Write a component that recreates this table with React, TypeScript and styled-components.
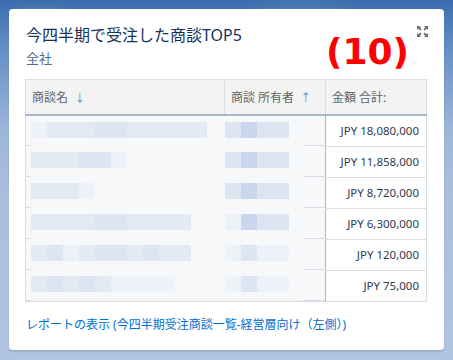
import React from 'react'
import styled, {createGlobalStyle} from 'styled-components'

type Deal = {
  amount: string
  name: string[]
  owner: string[]
}

// owners are masked, so each cell just shows its colour tiles
const L = '#e4eaf4'
const M = '#dde5f2'
const D = '#c9d6ee'
const F = '#eef1f7'

const deals: Deal[] = [
  {amount: 'JPY 18,080,000', name: [F, L, L, L, M, M, L, L, L, L, L], owner: [M, D, M, M]},
  {amount: 'JPY 11,858,000', name: [L, L, L, M, M, F], owner: [M, D, M, M]},
  {amount: 'JPY 8,720,000', name: [L, L, L, F], owner: [M, D, M, M]},
  {amount: 'JPY 6,300,000', name: [L, L, L, L, M, M, L, L, L, L], owner: [F, D, M, M]},
  {amount: 'JPY 120,000', name: [L, M, F, L, M, M, L, M, L, L], owner: [F, M, F, F]},
  {amount: 'JPY 75,000', name: [L, M, L, M, L, F, F, F, F], owner: [F, M, F, F]}
]

const GlobalStyle = createGlobalStyle`
  html, body {
    margin: 0;
    height: 100%;
  }
  body {
    font-family: "Noto Sans", "Noto Sans CJK JP", sans-serif;
    background:
      radial-gradient(ellipse 60px 30px at 40px 20px, rgba(255,255,255,0.08), transparent 70%),
      radial-gradient(ellipse 80px 30px at 300px 10px, rgba(255,255,255,0.07), transparent 70%),
      linear-gradient(to bottom, #3a6cae 0px, #6690c6 50px, #9db6da 130px, #aabfdd 200px, #b0c4e0 100%);
  }
`

export default function App() {
  return (
    <Page>
      <GlobalStyle />
      <Card>
        <Header>
          <Titles>
            <Title>今四半期で受注した商談TOP5</Title>
            <Subtitle>全社</Subtitle>
          </Titles>
          <Badge>(10)</Badge>
          <ExpandButton aria-label="expand">
            <ExpandIcon />
          </ExpandButton>
        </Header>
        <Table>
          <thead>
            <tr>
              <Th $width={199}>
                商談名 <SortArrow>↓</SortArrow>
              </Th>
              <Th $width={101}>
                商談 所有者 <SortArrow>↑</SortArrow>
              </Th>
              <Th>金額 合計:</Th>
            </tr>
          </thead>
          <tbody>
            {deals.map((deal, i) => (
              <tr key={i}>
                <MaskCell $tick="left">
                  <Tiles colors={deal.name} inset={5} />
                </MaskCell>
                <MaskCell $tick="right">
                  <Tiles colors={deal.owner} inset={0} />
                </MaskCell>
                <AmountCell $last={i === deals.length - 1}>{deal.amount}</AmountCell>
              </tr>
            ))}
          </tbody>
        </Table>
        <Footer>
          <ReportLink href="#">レポートの表示 (今四半期受注商談一覧-経営層向け（左側）)</ReportLink>
        </Footer>
      </Card>
    </Page>
  )
}

function Tiles({colors, inset}: {colors: string[]; inset: number}) {
  return (
    <TileRow $inset={inset}>
      {colors.map((c, i) => (
        <Tile key={i} style={{background: c}} />
      ))}
    </TileRow>
  )
}

function ExpandIcon() {
  return (
    <svg width="11" height="11" viewBox="0 0 11 11" fill="#706e6b">
      <path d="M0 0h4L2.7 1.3 4.6 3.2 3.2 4.6 1.3 2.7 0 4z" />
      <path d="M11 0v4L9.7 2.7 7.8 4.6 6.4 3.2 8.3 1.3 7 0z" />
      <path d="M0 11V7l1.3 1.3 1.9-1.9 1.4 1.4-1.9 1.9L4 11z" />
      <path d="M11 11H7l1.3-1.3-1.9-1.9 1.4-1.4 1.9 1.9L11 7z" />
    </svg>
  )
}

const Page = styled.div`
  padding: 9px 9px 10px;
`

const Card = styled.div`
  background: #fff;
  border-radius: 4px;
  box-shadow: 0 2px 2px rgba(0, 0, 0, 0.12);
  padding: 14px 17px 0 16px;
  height: 341px;
  box-sizing: border-box;
  display: flex;
  flex-direction: column;
`

const Header = styled.div`
  position: relative;
  display: flex;
  align-items: flex-start;
  height: 56px;
`

const Titles = styled.div`
  display: flex;
  flex-direction: column;
  flex: 1;
  padding-left: 1px;
`

const Title = styled.div`
  font-size: 16px;
  line-height: 24px;
  color: #16325c;
`

const Subtitle = styled.div`
  font-size: 13px;
  line-height: 20px;
  color: #54698d;
  margin-top: 1px;
`

const Badge = styled.div`
  font-family: "DejaVu Sans", sans-serif;
  font-weight: bold;
  font-size: 36px;
  line-height: 42px;
  color: #ff0000;
  margin: 8px 8px 0 0;
`

const ExpandButton = styled.div`
  display: flex;
  margin-top: 3px;
  margin-right: -1px;
`

const Table = styled.table`
  border-collapse: collapse;
  width: 402px;
  table-layout: fixed;
  border: 1px solid #d8dde6;
  font-size: 12px;
`

const Th = styled.th<{$width?: number}>`
  box-sizing: border-box;
  width: ${(p) => (p.$width ? `${p.$width}px` : 'auto')};
  height: 35px;
  padding: 0 0 0 6px;
  text-align: left;
  font-weight: normal;
  color: #5f6368;
  background: #f3f3f3;
  border-left: 1px solid #d8dde6;
  border-bottom: 2px solid #a8b8cc;
  white-space: nowrap;
`

const SortArrow = styled.span`
  color: #5a8ccb;
  font-size: 11px;
  margin-left: 3px;
`

const MaskCell = styled.td<{$tick: 'left' | 'right'}>`
  position: relative;
  height: 30px;
  padding: 0;
  background: #f7f8fa;
  vertical-align: top;
  overflow: hidden;

  &::after {
    content: '';
    position: absolute;
    bottom: 0;
    ${(p) => (p.$tick === 'left' ? 'left: 0; width: 5px;' : 'right: 0; width: 22px;')}
    height: 1px;
    background: #d8dde6;
  }
`

const TileRow = styled.div<{$inset: number}>`
  display: flex;
  margin-top: 6px;
  padding-left: ${(p) => p.$inset}px;
`

const Tile = styled.div`
  width: 16px;
  height: 16px;
`

const AmountCell = styled.td<{$last: boolean}>`
  height: 30px;
  padding: 0 7px 0 0;
  font-size: 11.5px;
  text-align: right;
  color: #2e3b52;
  background: #fff;
  border-left: 1px solid #a8b7c7;
  border-bottom: ${(p) => (p.$last ? 'none' : '1px solid #d8dde6')};
  white-space: nowrap;
`

const Footer = styled.div`
  display: flex;
  align-items: center;
  flex: 1;
  padding-left: 1px;
  padding-bottom: 4px;
`

const ReportLink = styled.a`
  font-size: 12px;
  color: #0070d2;
  text-decoration: none;
`
